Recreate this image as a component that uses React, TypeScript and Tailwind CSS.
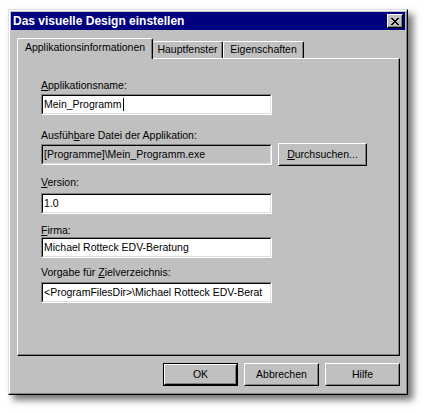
import React from "react";

// Win95-Dialog "Das visuelle Design einstellen"

function Sunken({
  children,
  className = "",
  disabled = false,
}: {
  children: React.ReactNode;
  className?: string;
  disabled?: boolean;
}) {
  return (
    <div
      className={`h-[21px] w-[231px] border border-[#808080] border-r-white border-b-white ${className}`}
    >
      <div
        className={`flex h-full items-center overflow-hidden whitespace-nowrap border border-black border-r-[#dfdfdf] border-b-[#dfdfdf] pl-[1px] ${
          disabled ? "bg-[#c0c0c0]" : "bg-white"
        }`}
      >
        {children}
      </div>
    </div>
  );
}

function Button({
  children,
  isDefault = false,
  className = "",
}: {
  children: React.ReactNode;
  isDefault?: boolean;
  className?: string;
}) {
  const face = (
    <div className="flex h-full w-full items-center justify-center border border-white border-r-black border-b-black">
      <div className="flex h-full w-full items-center justify-center border border-[#c0c0c0] border-r-[#808080] border-b-[#808080]">
        {children}
      </div>
    </div>
  );
  if (isDefault) {
    return (
      <div className={`h-[23px] w-[75px] border border-black ${className}`}>
        <div className="h-full w-full">{face}</div>
      </div>
    );
  }
  return <div className={`h-[23px] w-[75px] ${className}`}>{face}</div>;
}

function Label({
  children,
  className = "",
}: {
  children: React.ReactNode;
  className?: string;
}) {
  return <div className={`h-[13px] leading-[13px] ${className}`}>{children}</div>;
}

function CloseButton() {
  return (
    <div className="mr-[2px] h-[14px] w-[16px] border border-white border-r-black border-b-black bg-[#c0c0c0]">
      <div className="flex h-full w-full items-center justify-center border border-[#c0c0c0] border-r-[#808080] border-b-[#808080]">
        <svg width="8" height="7" viewBox="0 0 8 7" shapeRendering="crispEdges">
          <path
            fill="#000"
            d="M0 0h2v1H0zM6 0h2v1H6zM1 1h2v1H1zM5 1h2v1H5zM2 2h4v1H2zM3 3h2v1H3zM2 4h4v1H2zM1 5h2v1H1zM5 5h2v1H5zM0 6h2v1H0zM6 6h2v1H6z"
          />
        </svg>
      </div>
    </div>
  );
}

export default function App() {
  return (
    <div className="h-[413px] w-[424px] bg-white pl-[8px] pt-[9px] font-['Liberation_Sans',Arial,sans-serif] text-[10.5px] text-black">
      <div className="w-[400px] border border-[#dfdfdf] border-r-black border-b-black shadow-[5px_5px_7px_rgba(0,0,0,0.55)]">
        <div className="border border-white border-r-[#808080] border-b-[#808080] bg-[#c0c0c0] p-px">
          {/* Titelleiste */}
          <div className="flex h-[18px] items-center justify-between bg-[#000080] pl-[2px]">
            <span className="text-[12px] font-bold leading-none text-white">
              Das visuelle Design einstellen
            </span>
            <CloseButton />
          </div>

          {/* Reiter */}
          <div className="ml-[6px] mt-[8px] flex h-[20px] items-end">
            <div className="relative z-10 -mb-px flex h-[21px] w-[136px] items-center justify-center rounded-t-[2px] border-l border-t border-white border-r border-r-black bg-[#c0c0c0] pb-[2px] shadow-[inset_-1px_0_0_#808080]">
              Applikationsinformationen
            </div>
            <div className="flex h-[17px] w-[70px] items-center justify-center rounded-t-[2px] border-t border-white border-r border-r-black pb-px shadow-[inset_-1px_0_0_#808080]">
              Hauptfenster
            </div>
            <div className="flex h-[17px] w-[81px] items-center justify-center rounded-t-[2px] border-l border-t border-white border-r border-r-black pb-px shadow-[inset_-1px_0_0_#808080]">
              Eigenschaften
            </div>
          </div>

          {/* Reiterseite */}
          <div className="ml-[6px] mr-[5px] h-[298px] border border-white border-r-black border-b-black shadow-[inset_-1px_-1px_0_#808080]">
            <div className="flex flex-col pl-[23px] pt-[20px]">
              <Label>
                <u>A</u>pplikationsname:
              </Label>
              <Sunken className="mt-[2px]">
                <span>Mein_Programm</span>
                <span className="ml-[1px] inline-block h-[13px] w-px bg-black" />
              </Sunken>

              <Label className="mt-[14px]">
                Ausfüh<u>b</u>are Datei der Applikation:
              </Label>
              <div className="mt-px flex h-[23px] items-center">
                <Sunken disabled>
                  <span>{"[Programme]\\Mein_Programm.exe"}</span>
                </Sunken>
                <Button className="ml-[6px] w-[89px]">
                  <span>
                    <u>D</u>urchsuchen...
                  </span>
                </Button>
              </div>

              <Label className="mt-[10px]">
                <u>V</u>ersion:
              </Label>
              <Sunken className="mt-[4px]">
                <span>1.0</span>
              </Sunken>

              <Label className="mt-[10px] h-[12px]">
                <u>F</u>irma:
              </Label>
              <Sunken>
                <span>Michael Rotteck EDV-Beratung</span>
              </Sunken>

              <Label className="mt-[8px]">
                Vorgabe für <u>Z</u>ielverzeichnis:
              </Label>
              <Sunken className="mt-[3px]">
                <span>{"<ProgramFilesDir>\\Michael Rotteck EDV-Berat"}</span>
              </Sunken>
            </div>
          </div>

          {/* Schaltflächen */}
          <div className="mr-[5px] mt-[7px] mb-[6px] flex justify-end gap-[6px]">
            <Button isDefault>OK</Button>
            <Button>Abbrechen</Button>
            <Button>Hilfe</Button>
          </div>
        </div>
      </div>
    </div>
  );
}
